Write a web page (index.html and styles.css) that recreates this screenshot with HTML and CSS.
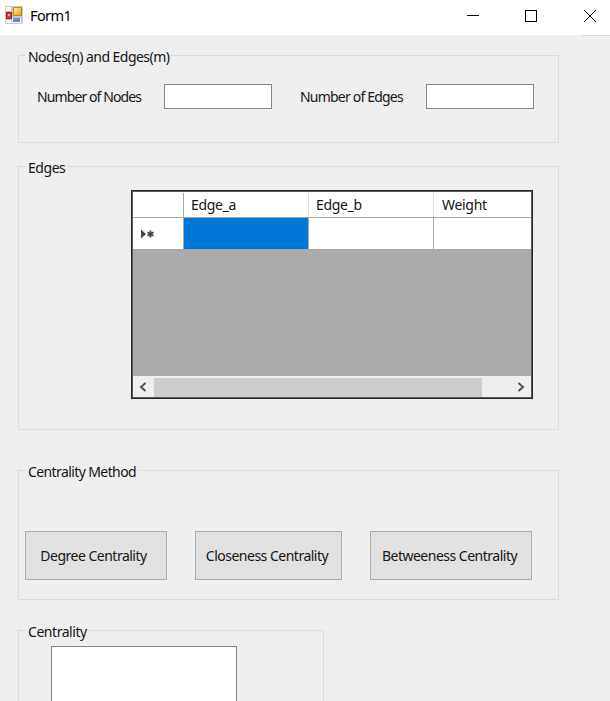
FILE: index.html
```
<!DOCTYPE html>
<html lang="en">
<head>
<meta charset="utf-8">
<title>Form1</title>
<link rel="stylesheet" href="styles.css">
</head>
<body>
<header class="titlebar">
  <svg class="app-icon" width="18" height="18" viewBox="0 0 18 18">
    <defs>
      <linearGradient id="gold" x2="1" y2="1"><stop stop-color="#fff0a0"/><stop offset="1" stop-color="#e5a500"/></linearGradient>
      <linearGradient id="blue" x2="1" y2="1"><stop stop-color="#82b8ff"/><stop offset="1" stop-color="#2f70dc"/></linearGradient>
    </defs>
    <rect width="18" height="18" rx="1" fill="#c9c9c9"/>
    <path d="M1 1h5v4H1zM1 14h5v3H1zM7 12h9v5H7z" fill="#f7f7f7"/>
    <rect x="1.500" y="6.500" width="5" height="6" fill="#c8463d" stroke="#96251d"/>
    <rect x="3" y="8" width="2" height="2" fill="#eda29a"/>
    <rect x="8.500" y="1.500" width="8" height="8" fill="url(#gold)" stroke="#b98a1c"/>
    <rect x="8.500" y="12.500" width="6" height="3" fill="url(#blue)" stroke="#5b8cda"/>
  </svg>
  <h1 class="title">Form1</h1>
  <svg class="controls" width="130" height="14" viewBox="0 0 130 14" fill="none" stroke="#000" shape-rendering="crispEdges">
    <path d="M0 6.500h12M58.500 1.500h11v11h-11z"/>
    <path d="M117 1l12 12M129 1l-12 12" shape-rendering="auto"/>
  </svg>
</header>
<main class="form">
  <section class="group counts">
    <h2 class="legend counts-legend">Nodes(n) and Edges(m)</h2>
    <div class="fields">
      <label class="label nodes" for="nodes">Number of Nodes</label>
      <input class="textbox" id="nodes">
      <label class="label edges" for="edges">Number of Edges</label>
      <input class="textbox" id="edges">
    </div>
  </section>
  <section class="group edge-list">
    <h2 class="legend">Edges</h2>
    <div class="datagrid">
      <div class="row head">
        <span class="cell"></span><span class="cell">Edge_a</span><span class="cell">Edge_b</span><span class="cell">Weight</span>
      </div>
      <div class="row entry">
        <span class="cell marker">
          <svg width="14" height="10" viewBox="0 0 14 10"><path d="M0 0.500L5 5 0 9.500z" fill="#444"/><path d="M9.500 1.500v7M6.500 3.200l6 3.600M12.500 3.200l-6 3.600" stroke="#444" stroke-width="1.800"/></svg>
        </span><span class="cell selected"></span><span class="cell"></span><span class="cell"></span>
      </div>
      <div class="empty"></div>
      <div class="scrollbar">
        <svg class="arrow" width="8" height="10" viewBox="0 0 8 10"><path d="M6.500 1L2 5l4.500 4" fill="none" stroke="#555" stroke-width="2"/></svg>
        <div class="thumb"></div>
        <svg class="arrow right" width="8" height="10" viewBox="0 0 8 10"><path d="M1.500 1L6 5 1.500 9" fill="none" stroke="#555" stroke-width="2"/></svg>
      </div>
    </div>
  </section>
  <section class="group methods">
    <h2 class="legend method-legend">Centrality Method</h2>
    <div class="buttons">
      <button class="button degree">Degree Centrality</button>
      <button class="button closeness">Closeness Centrality</button>
      <button class="button between">Betweeness Centrality</button>
    </div>
  </section>
  <section class="group results">
    <h2 class="legend">Centrality</h2>
    <div class="listbox"></div>
  </section>
</main>
</body>
</html>
```
FILE: styles.css
```
* { box-sizing: border-box; }
body {
  margin: 0;
  height: 701px;
  overflow: hidden;
  background: #efefef;
  color: #151515;
  font: 14px/18px "Noto Sans", sans-serif;
  letter-spacing: -0.45px;
}
.titlebar {
  display: flex;
  align-items: flex-start;
  height: 35px;
  padding: 6px 13px 0 5px;
  background: #fff;
}
.title {
  margin: -1px 0 0 7px;
  color: #000;
  font-size: 14.5px;
  font-weight: 400;
  line-height: 20px;
  letter-spacing: -0.6px;
}
.controls { margin: 3px 0 0 auto; }
.form {
  height: 666px;
  padding: 20px 0 0 18px;
  background: linear-gradient(#d5d5d5, #d5d5d5) right top / 28px 1px no-repeat;
}
.group {
  width: 541px;
  border: 1px solid #dcdcdc;
}
.legend {
  width: fit-content;
  height: 18px;
  margin: -9px 0 0 7px;
  padding: 1px 2px 0;
  background: #efefef;
  font-size: 14px;
  font-weight: 400;
  white-space: nowrap;
}
.counts-legend { letter-spacing: -0.55px; }
.method-legend { letter-spacing: -0.6px; }
.counts { height: 88px; }
.fields {
  display: flex;
  align-items: center;
  margin: 19px 0 0 18px;
}
.label { white-space: nowrap; }
.nodes { width: 127px; letter-spacing: -0.9px; }
.edges { width: 126px; margin-left: 28px; letter-spacing: -0.8px; }
.textbox {
  width: 108px;
  height: 25px;
  padding: 0 4px;
  border: 1px solid #858585;
  background: #fff;
}
.edge-list { height: 264px; margin-top: 23px; }
.datagrid {
  width: 402px;
  height: 209px;
  margin: 14px 0 0 112px;
  border: 1px solid #262626;
  outline: 1px solid #5a5a5a;
  outline-offset: -2px;
  background: #ababab;
  display: flex;
  flex-direction: column;
}
.row {
  display: grid;
  grid-template-columns: 52px 125px 125px 1fr;
  background: #fff;
  border-bottom: 1px solid #a6a6a6;
}
.cell { border-right: 1px solid #a9a9a9; padding: 3px 8px 0 7px; letter-spacing: -0.3px; }
.cell:last-child { border-right: 0; padding-left: 8px; }
.head { height: 27px; padding-top: 2px; }
.head .cell { border-color: #dedede; }
.head .cell:first-child { border-color: #a9a9a9; }
.entry { height: 32px; }
.marker { display: flex; align-items: flex-start; padding: 11px 0 0 9px; }
.selected { background: #0078d7; }
.empty { flex: 1; }
.scrollbar {
  display: flex;
  align-items: center;
  height: 22px;
  padding: 0 7px;
  background: #efefef;
}
.thumb { width: 328px; height: 19px; margin-left: 7px; background: #cdcdcd; }
.right { margin-left: auto; }
.methods { height: 130px; margin-top: 40px; }
.buttons { display: flex; margin: 51px 0 0 6px; }
.button {
  height: 49px;
  padding: 1px 0 0;
  border: 1px solid #adadad;
  background: #e1e1e1;
  color: inherit;
  font: inherit;
  letter-spacing: -0.5px;
  white-space: nowrap;
}
.degree { width: 142px; padding-right: 5px; }
.closeness { width: 147px; margin-left: 28px; padding-right: 3px; }
.between { width: 162px; margin-left: 28px; padding-right: 3px; }
.results {
  width: 306px;
  height: 71px;
  margin-top: 30px;
  border-bottom: 0;
}
.listbox {
  width: 186px;
  height: 55px;
  margin: 6px 0 0 32px;
  border: 1px solid #858585;
  border-bottom: 0;
  background: #fff;
}
```
